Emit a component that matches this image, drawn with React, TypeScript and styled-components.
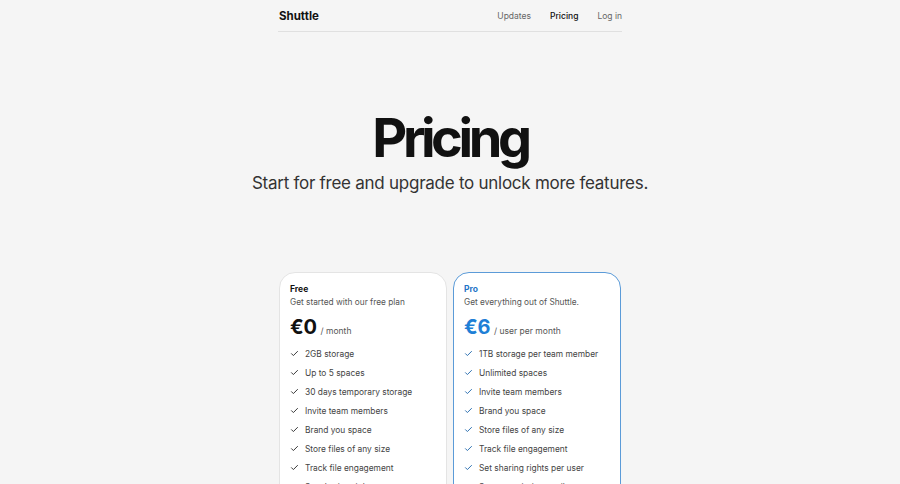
import React from "react";
import styled, { createGlobalStyle } from "styled-components";

const GlobalStyle = createGlobalStyle`
  html, body {
    margin: 0;
    padding: 0;
    background: #f5f5f5;
    font-family: Inter, "Liberation Sans", sans-serif;
    color: #111;
  }
`;

const Page = styled.div`
  display: flex;
  flex-direction: column;
  align-items: center;
  height: 484px;
  overflow: hidden;

  & > * {
    flex-shrink: 0;
  }
`;

const Nav = styled.nav`
  width: 344px;
  height: 32px;
  display: flex;
  align-items: center;
  justify-content: space-between;
  border-bottom: 1px solid #e0e0e0;
  box-sizing: border-box;
`;

const Logo = styled.div`
  font-size: 11.5px;
  font-weight: 700;
  padding-left: 1px;
`;

const Links = styled.ul`
  display: flex;
  gap: 19px;
  margin: 0;
  padding: 0;
  list-style: none;
`;

const NavLink = styled.li<{ $active?: boolean }>`
  font-size: 8.5px;
  color: ${(p) => (p.$active ? "#111" : "#666")};
  font-weight: ${(p) => (p.$active ? 500 : 400)};
`;

const Hero = styled.header`
  display: flex;
  flex-direction: column;
  align-items: center;
  margin-top: 76px;
`;

const Title = styled.h1`
  margin: 0;
  font-size: 54px;
  font-weight: 700;
  letter-spacing: -4.4px;
  line-height: 60px;
`;

const Subtitle = styled.p`
  margin: 5px 0 0;
  font-size: 17px;
  color: #333;
  letter-spacing: -0.26px;
`;

const Cards = styled.div`
  display: flex;
  gap: 6px;
  margin-top: 79px;
`;

const Card = styled.div<{ $pro?: boolean }>`
  width: 168px;
  height: 260px;
  box-sizing: border-box;
  background: #fff;
  border: 1px solid ${(p) => (p.$pro ? "#5b9bd8" : "#e4e4e4")};
  border-radius: 16px;
  padding: 11px 10px 0;
`;

const PlanName = styled.div<{ $pro?: boolean }>`
  font-size: 8.5px;
  font-weight: 700;
  color: ${(p) => (p.$pro ? "#1f75c7" : "#111")};
`;

const PlanDesc = styled.div`
  font-size: 8.3px;
  color: #555;
  margin-top: 3px;
`;

const PriceRow = styled.div`
  display: flex;
  align-items: baseline;
  gap: 4px;
  margin-top: 8px;
`;

const Price = styled.span<{ $pro?: boolean }>`
  font-size: 20px;
  font-weight: 700;
  color: ${(p) => (p.$pro ? "#1f7fd6" : "#111")};
  letter-spacing: -0.3px;
`;

const Per = styled.span`
  font-size: 8.5px;
  color: #555;
`;

const Features = styled.ul`
  list-style: none;
  margin: 8px 0 0;
  padding: 0;
  display: flex;
  flex-direction: column;
  gap: 5.4px;
`;

const Feature = styled.li`
  display: flex;
  align-items: center;
  gap: 6px;
  font-size: 8.4px;
  color: #444;
  height: 13.6px;
`;

const Check = ({ color }: { color: string }) => (
  <svg width="9" height="9" viewBox="0 0 24 24" fill="none" stroke={color} strokeWidth="2.6" strokeLinecap="round" strokeLinejoin="round">
    <path d="M4 12.5l5 5L20 6.5" />
  </svg>
);

const plans = [
  {
    name: "Free",
    desc: "Get started with our free plan",
    price: "€0",
    per: "/ month",
    features: [
      "2GB storage",
      "Up to 5 spaces",
      "30 days temporary storage",
      "Invite team members",
      "Brand you space",
      "Store files of any size",
      "Track file engagement",
      "Set sharing rights per user",
    ],
  },
  {
    name: "Pro",
    desc: "Get everything out of Shuttle.",
    price: "€6",
    per: "/ user per month",
    pro: true,
    features: [
      "1TB storage per team member",
      "Unlimited spaces",
      "Invite team members",
      "Brand you space",
      "Store files of any size",
      "Track file engagement",
      "Set sharing rights per user",
      "Support priority email",
    ],
  },
];

export default function App() {
  return (
    <Page>
      <GlobalStyle />
      <Nav>
        <Logo>Shuttle</Logo>
        <Links>
          <NavLink>Updates</NavLink>
          <NavLink $active>Pricing</NavLink>
          <NavLink>Log in</NavLink>
        </Links>
      </Nav>
      <Hero>
        <Title>Pricing</Title>
        <Subtitle>Start for free and upgrade to unlock more features.</Subtitle>
      </Hero>
      <Cards>
        {plans.map((p) => (
          <Card key={p.name} $pro={p.pro}>
            <PlanName $pro={p.pro}>{p.name}</PlanName>
            <PlanDesc>{p.desc}</PlanDesc>
            <PriceRow>
              <Price $pro={p.pro}>{p.price}</Price>
              <Per>{p.per}</Per>
            </PriceRow>
            <Features>
              {p.features.map((f) => (
                <Feature key={f}>
                  <Check color={p.pro ? "#2b6fb0" : "#333"} />
                  {f}
                </Feature>
              ))}
            </Features>
          </Card>
        ))}
      </Cards>
    </Page>
  );
}
